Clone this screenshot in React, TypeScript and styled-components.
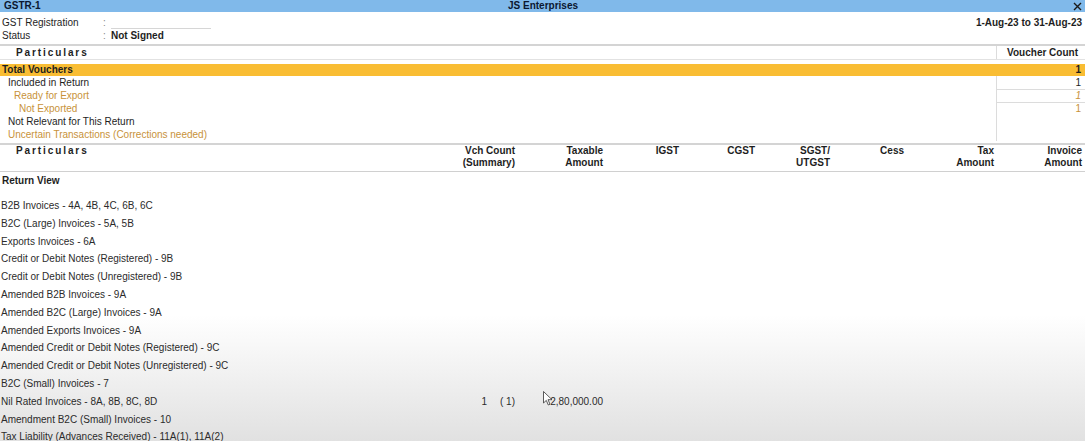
import styled, { createGlobalStyle } from "styled-components";

const GlobalStyle = createGlobalStyle`
  html, body { margin: 0; padding: 0; }
  body {
    font-family: "Liberation Sans", Arial, sans-serif;
    font-size: 10px;
    color: #1e1e1e;
  }
`;

const ORANGE = "#c8923a";

const Page = styled.div`
  position: relative;
  height: 441px;
  overflow: hidden;
  background: linear-gradient(to bottom, #ffffff 0px, #ffffff 315px, #e1e1e1 441px);
`;

const TitleBar = styled.div`
  height: 12px;
  background: #80b9ea;
  display: grid;
  grid-template-columns: 1fr auto 1fr;
  align-items: center;
  padding: 0 3px 0 4px;
  font-weight: bold;
  color: #0b1730;
  line-height: 12px;
`;

const CloseBox = styled.div`
  justify-self: end;
  display: flex;
  align-items: center;
`;

const Info = styled.div`
  display: grid;
  grid-template-columns: 1fr auto;
  padding: 4px 3px 2px 2px;
`;

const InfoRow = styled.div`
  display: grid;
  grid-template-columns: 101px 8px 100px;
  height: 13px;
  line-height: 13px;
  align-items: center;
`;

const Colon = styled.span`
  color: #888;
`;

const Value = styled.span<{ $field?: boolean }>`
  font-weight: bold;
  height: 13px;
  ${(p) => (p.$field ? "border-bottom: 1px solid #d6d6d6; height: 11px;" : "")}
`;

const Period = styled.div`
  font-weight: bold;
  line-height: 13px;
  text-align: right;
`;

const Section = styled.div`
  border-top: 2px solid #d4d4d4;
`;

const VRow = styled.div<{ $hl?: boolean; $indent?: number; $tone?: string; $mt?: number }>`
  display: grid;
  grid-template-columns: 1fr 89px;
  height: ${(p) => (p.$hl ? 12 : 13)}px;
  line-height: ${(p) => (p.$hl ? 12 : 13)}px;
  margin-top: ${(p) => p.$mt ?? 0}px;
  background: ${(p) => (p.$hl ? "#f9bd33" : "transparent")};
  font-weight: ${(p) => (p.$hl ? "bold" : "normal")};
  color: ${(p) => p.$tone ?? "#1e1e1e"};
  & > span:first-child {
    padding-left: ${(p) => p.$indent ?? 2}px;
  }
`;

const CountCell = styled.span<{ $line?: boolean; $bare?: boolean; $italic?: boolean; $pad?: number }>`
  text-align: right;
  padding-right: ${(p) => p.$pad ?? 4}px;
  border-left: ${(p) => (p.$bare ? "none" : "1px solid #dcdcdc")};
  border-bottom: ${(p) => (p.$line ? "1px solid #dcdcdc" : "none")};
  font-style: ${(p) => (p.$italic ? "italic" : "normal")};
`;

const HeadRow = styled.div`
  display: grid;
  grid-template-columns: 1fr 89px;
  height: 13px;
  line-height: 13px;
  font-weight: bold;
  border-bottom: 1px solid #e2e2e2;
`;

const Spaced = styled.span`
  letter-spacing: 1.9px;
  padding-left: 16px;
`;

const Table = styled.div`
  border-top: 2px solid #d4d4d4;
  margin-top: 2px;
`;

const COLS = "1fr 88px 88px 76px 76px 75px 74px 90px 88px";

const TableHead = styled.div`
  display: grid;
  grid-template-columns: ${COLS};
  padding: 0 3px 2px 0;
  border-bottom: 1px solid #d0d0d0;
  font-weight: bold;
  line-height: 12px;
`;

const HeadCell = styled.div<{ $left?: boolean }>`
  text-align: ${(p) => (p.$left ? "left" : "right")};
  white-space: pre-line;
`;

const GroupTitle = styled.div`
  font-weight: bold;
  height: 16px;
  line-height: 16px;
  padding: 1px 0 0 2px;
`;

const List = styled.div`
  padding-top: 8px;
`;

const Line = styled.div`
  display: grid;
  grid-template-columns: ${COLS};
  height: 17.8px;
  line-height: 17.8px;
  padding: 0 3px 0 1px;
  color: #2b2b2b;
`;

const Num = styled.span`
  text-align: right;
  display: flex;
  justify-content: flex-end;
  gap: 13px;
`;

const Cursor = styled.svg`
  position: absolute;
  left: 543px;
  top: 391px;
`;

const rows: { name: string; count?: [string, string]; taxable?: string }[] = [
  { name: "B2B Invoices - 4A, 4B, 4C, 6B, 6C" },
  { name: "B2C (Large) Invoices - 5A, 5B" },
  { name: "Exports Invoices - 6A" },
  { name: "Credit or Debit Notes (Registered) - 9B" },
  { name: "Credit or Debit Notes (Unregistered) - 9B" },
  { name: "Amended B2B Invoices - 9A" },
  { name: "Amended B2C (Large) Invoices - 9A" },
  { name: "Amended Exports Invoices - 9A" },
  { name: "Amended Credit or Debit Notes (Registered) - 9C" },
  { name: "Amended Credit or Debit Notes (Unregistered) - 9C" },
  { name: "B2C (Small) Invoices - 7" },
  { name: "Nil Rated Invoices - 8A, 8B, 8C, 8D", count: ["1", "( 1)"], taxable: "2,80,000.00" },
  { name: "Amendment B2C (Small) Invoices - 10" },
  { name: "Tax Liability (Advances Received) - 11A(1), 11A(2)" },
];

export default function App() {
  return (
    <Page>
      <GlobalStyle />
      <TitleBar>
        <span>GSTR-1</span>
        <span>JS Enterprises</span>
        <CloseBox>
          <svg width="9" height="9" viewBox="0 0 9 9">
            <path d="M1 1L8 8M8 1L1 8" stroke="#1a1a1a" strokeWidth="1.4" />
          </svg>
        </CloseBox>
      </TitleBar>

      <Info>
        <div>
          <InfoRow>
            <span>GST Registration</span>
            <Colon>:</Colon>
            <Value $field />
          </InfoRow>
          <InfoRow>
            <span>Status</span>
            <Colon>:</Colon>
            <Value>Not Signed</Value>
          </InfoRow>
        </div>
        <Period>1-Aug-23 to 31-Aug-23</Period>
      </Info>

      <Section>
        <HeadRow>
          <Spaced>Particulars</Spaced>
          <CountCell $pad={7}>Voucher Count</CountCell>
        </HeadRow>
        <VRow $hl $mt={4}>
          <span>Total Vouchers</span>
          <CountCell $bare>1</CountCell>
        </VRow>
        <VRow $indent={8}>
          <span>Included in Return</span>
          <CountCell $line>1</CountCell>
        </VRow>
        <VRow $indent={14} $tone={ORANGE}>
          <span>Ready for Export</span>
          <CountCell $line $italic>1</CountCell>
        </VRow>
        <VRow $indent={19} $tone={ORANGE}>
          <span>Not Exported</span>
          <CountCell>1</CountCell>
        </VRow>
        <VRow $indent={8}>
          <span>Not Relevant for This Return</span>
          <CountCell />
        </VRow>
        <VRow $indent={8} $tone={ORANGE}>
          <span>Uncertain Transactions (Corrections needed)</span>
          <CountCell />
        </VRow>
      </Section>

      <Table>
        <TableHead>
          <HeadCell $left>
            <Spaced>Particulars</Spaced>
          </HeadCell>
          <HeadCell>{"Vch Count\n(Summary)"}</HeadCell>
          <HeadCell>{"Taxable\nAmount"}</HeadCell>
          <HeadCell>IGST</HeadCell>
          <HeadCell>CGST</HeadCell>
          <HeadCell>{"SGST/\nUTGST"}</HeadCell>
          <HeadCell>Cess</HeadCell>
          <HeadCell>{"Tax\nAmount"}</HeadCell>
          <HeadCell>{"Invoice\nAmount"}</HeadCell>
        </TableHead>
        <GroupTitle>Return View</GroupTitle>
        <List>
          {rows.map((r) => (
            <Line key={r.name}>
              <span>{r.name}</span>
              <Num>
                {r.count && (
                  <>
                    <span>{r.count[0]}</span>
                    <span>{r.count[1]}</span>
                  </>
                )}
              </Num>
              <Num>{r.taxable}</Num>
              <span />
              <span />
              <span />
              <span />
              <span />
              <span />
            </Line>
          ))}
        </List>
      </Table>

      <Cursor width="10" height="15" viewBox="0 0 10 15">
        <path d="M0.5 0.5L0.5 12L3.3 9.4L5.3 14L7 13.2L5 8.7L9 8.7Z" fill="#fff" stroke="#333" strokeWidth="0.8" />
      </Cursor>
    </Page>
  );
}
